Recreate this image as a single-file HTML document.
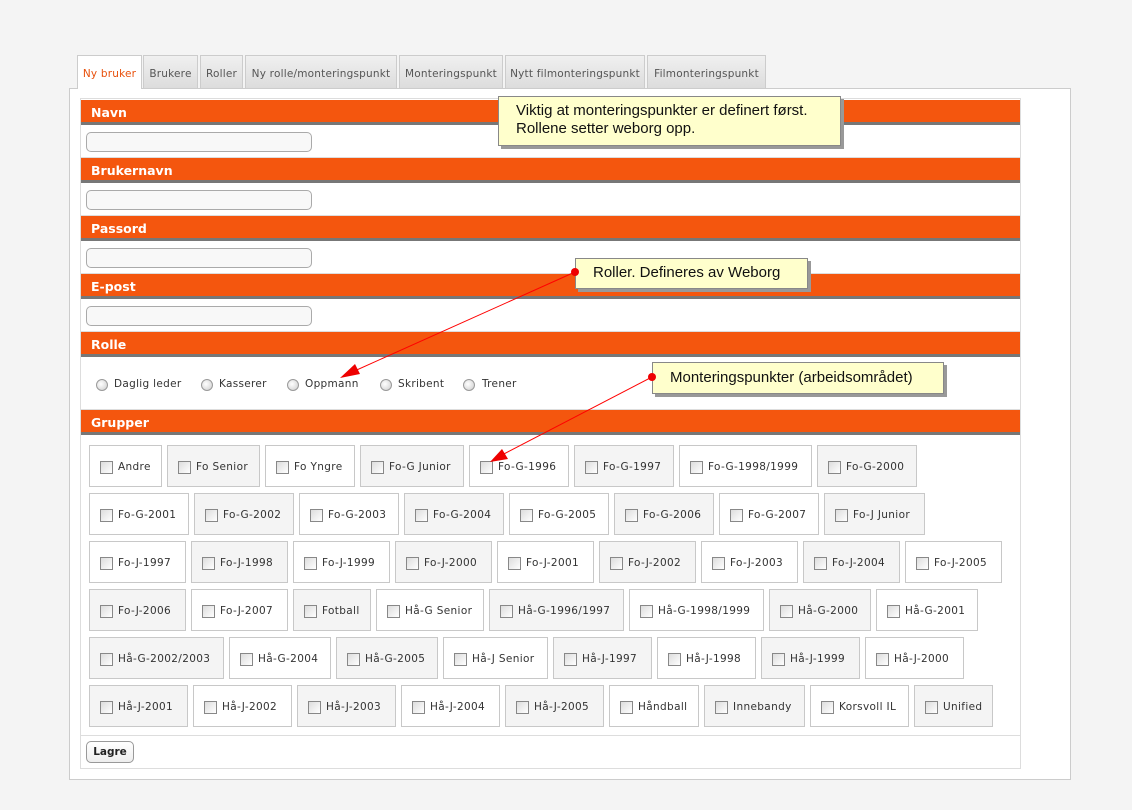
<!DOCTYPE html>
<html><head><meta charset="utf-8"><style>
*{box-sizing:border-box;margin:0;padding:0}
body{width:1132px;height:810px;background:#f4f4f4;position:relative;font-family:"DejaVu Sans",Verdana,sans-serif;font-size:11px;color:#333;overflow:hidden}
.abs{position:absolute}
.tab{position:absolute;top:55px;height:33px;border:1px solid #ccc;border-bottom:none;background:linear-gradient(#f0f0f0,#dcdcdc);color:#555;font-size:10.5px;line-height:36px;text-align:center;white-space:nowrap;letter-spacing:0.2px}
.tab.act{background:#fff;color:#e8500c;height:34px}
.outer{position:absolute;left:69px;top:88px;width:1002px;height:692px;background:#fff;border:1px solid #ccc}
.inner{position:absolute;left:80px;top:98px;width:941px;height:671px;border:1px solid #ddd;background:#fff}
.hd{position:absolute;left:81px;width:939px;height:25px;background:#f4560e;border-bottom:3px solid #777;color:#fff;font-weight:bold;font-size:12.5px;line-height:25px;padding-left:10px;font-family:"DejaVu Sans",sans-serif}
.sep{position:absolute;left:81px;width:939px;height:1px;background:#ddd}
.inp{position:absolute;left:86px;width:226px;height:20px;border:1px solid #aaa;border-radius:5px;background:#f8f8f8}
.rad{position:absolute;top:379px;width:12px;height:12px;border-radius:50%;border:1px solid #999;background:radial-gradient(circle at 40% 40%,#fff,#ccc)}
.rl{position:absolute;top:378px;font-size:10.5px;color:#333;letter-spacing:0.3px}
.g{position:absolute;height:42px;border:1px solid #c8c8c8;background:#fff;font-size:10.5px;line-height:42px;padding-left:28px;white-space:nowrap;color:#333;letter-spacing:0.35px}
.g.o{background:#f4f4f4}
.g:before{content:"";position:absolute;left:10px;top:15px;width:11px;height:11px;border:1px solid #888;background:linear-gradient(135deg,#ddd,#fff)}
.note{position:absolute;background:#ffffcc;border:1px solid #888;box-shadow:3px 3px 0 #999;font-family:"Liberation Sans",Arial,sans-serif;font-size:15px;color:#111}
</style></head><body>
<div class="outer"></div>
<div class="tab act" style="left:77px;width:65px">Ny bruker</div>
<div class="tab" style="left:143px;width:55px">Brukere</div>
<div class="tab" style="left:200px;width:43px">Roller</div>
<div class="tab" style="left:245px;width:152px">Ny rolle/monteringspunkt</div>
<div class="tab" style="left:399px;width:104px">Monteringspunkt</div>
<div class="tab" style="left:505px;width:140px">Nytt filmonteringspunkt</div>
<div class="tab" style="left:647px;width:119px">Filmonteringspunkt</div>
<div class="inner"></div>

<div class="hd" style="top:100px">Navn</div><div class="inp" style="top:132px"></div><div class="sep" style="top:157px"></div>
<div class="hd" style="top:158px">Brukernavn</div><div class="inp" style="top:190px"></div><div class="sep" style="top:215px"></div>
<div class="hd" style="top:216px">Passord</div><div class="inp" style="top:248px"></div><div class="sep" style="top:273px"></div>
<div class="hd" style="top:274px">E-post</div><div class="inp" style="top:306px"></div><div class="sep" style="top:331px"></div>
<div class="hd" style="top:332px">Rolle</div>
<div class="rad" style="left:96px"></div><div class="rl" style="left:114px">Daglig leder</div>
<div class="rad" style="left:201px"></div><div class="rl" style="left:219px">Kasserer</div>
<div class="rad" style="left:287px"></div><div class="rl" style="left:305px">Oppmann</div>
<div class="rad" style="left:380px"></div><div class="rl" style="left:398px">Skribent</div>
<div class="rad" style="left:463px"></div><div class="rl" style="left:482px">Trener</div>
<div class="sep" style="top:409px"></div>
<div class="hd" style="top:410px">Grupper</div>

<div class="g" style="top:445px;left:89px;width:73px">Andre</div>
<div class="g o" style="top:445px;left:167px;width:93px">Fo Senior</div>
<div class="g" style="top:445px;left:265px;width:90px">Fo Yngre</div>
<div class="g o" style="top:445px;left:360px;width:104px">Fo-G Junior</div>
<div class="g" style="top:445px;left:469px;width:100px">Fo-G-1996</div>
<div class="g o" style="top:445px;left:574px;width:100px">Fo-G-1997</div>
<div class="g" style="top:445px;left:679px;width:133px">Fo-G-1998/1999</div>
<div class="g o" style="top:445px;left:817px;width:100px">Fo-G-2000</div>

<div class="g" style="top:493px;left:89px;width:100px">Fo-G-2001</div>
<div class="g o" style="top:493px;left:194px;width:100px">Fo-G-2002</div>
<div class="g" style="top:493px;left:299px;width:100px">Fo-G-2003</div>
<div class="g o" style="top:493px;left:404px;width:100px">Fo-G-2004</div>
<div class="g" style="top:493px;left:509px;width:100px">Fo-G-2005</div>
<div class="g o" style="top:493px;left:614px;width:100px">Fo-G-2006</div>
<div class="g" style="top:493px;left:719px;width:100px">Fo-G-2007</div>
<div class="g o" style="top:493px;left:824px;width:101px">Fo-J Junior</div>

<div class="g" style="top:541px;left:89px;width:97px">Fo-J-1997</div>
<div class="g o" style="top:541px;left:191px;width:97px">Fo-J-1998</div>
<div class="g" style="top:541px;left:293px;width:97px">Fo-J-1999</div>
<div class="g o" style="top:541px;left:395px;width:97px">Fo-J-2000</div>
<div class="g" style="top:541px;left:497px;width:97px">Fo-J-2001</div>
<div class="g o" style="top:541px;left:599px;width:97px">Fo-J-2002</div>
<div class="g" style="top:541px;left:701px;width:97px">Fo-J-2003</div>
<div class="g o" style="top:541px;left:803px;width:97px">Fo-J-2004</div>
<div class="g" style="top:541px;left:905px;width:97px">Fo-J-2005</div>

<div class="g o" style="top:589px;left:89px;width:97px">Fo-J-2006</div>
<div class="g" style="top:589px;left:191px;width:97px">Fo-J-2007</div>
<div class="g o" style="top:589px;left:293px;width:78px">Fotball</div>
<div class="g" style="top:589px;left:376px;width:108px">Hå-G Senior</div>
<div class="g o" style="top:589px;left:489px;width:135px">Hå-G-1996/1997</div>
<div class="g" style="top:589px;left:629px;width:135px">Hå-G-1998/1999</div>
<div class="g o" style="top:589px;left:769px;width:102px">Hå-G-2000</div>
<div class="g" style="top:589px;left:876px;width:102px">Hå-G-2001</div>

<div class="g o" style="top:637px;left:89px;width:135px">Hå-G-2002/2003</div>
<div class="g" style="top:637px;left:229px;width:102px">Hå-G-2004</div>
<div class="g o" style="top:637px;left:336px;width:102px">Hå-G-2005</div>
<div class="g" style="top:637px;left:443px;width:105px">Hå-J Senior</div>
<div class="g o" style="top:637px;left:553px;width:99px">Hå-J-1997</div>
<div class="g" style="top:637px;left:657px;width:99px">Hå-J-1998</div>
<div class="g o" style="top:637px;left:761px;width:99px">Hå-J-1999</div>
<div class="g" style="top:637px;left:865px;width:99px">Hå-J-2000</div>

<div class="g o" style="top:685px;left:89px;width:99px">Hå-J-2001</div>
<div class="g" style="top:685px;left:193px;width:99px">Hå-J-2002</div>
<div class="g o" style="top:685px;left:297px;width:99px">Hå-J-2003</div>
<div class="g" style="top:685px;left:401px;width:99px">Hå-J-2004</div>
<div class="g o" style="top:685px;left:505px;width:99px">Hå-J-2005</div>
<div class="g" style="top:685px;left:609px;width:90px">Håndball</div>
<div class="g o" style="top:685px;left:704px;width:101px">Innebandy</div>
<div class="g" style="top:685px;left:810px;width:99px">Korsvoll IL</div>
<div class="g o" style="top:685px;left:914px;width:79px">Unified</div>

<div class="sep" style="top:735px"></div>
<div class="abs" style="left:86px;top:741px;width:48px;height:22px;border:1px solid #999;border-radius:5px;background:linear-gradient(#fff,#eee);font-weight:bold;font-size:10.5px;line-height:21px;text-align:center;color:#222">Lagre</div>

<div class="note" style="left:498px;top:96px;width:343px;height:50px;padding:5px 0 0 17px;line-height:18px">Viktig at monteringspunkter er definert først.<br>Rollene setter weborg opp.</div>
<div class="note" style="left:575px;top:258px;width:233px;height:31px;padding:5px 0 0 17px">Roller. Defineres av Weborg</div>
<div class="note" style="left:652px;top:362px;width:292px;height:32px;padding:6px 0 0 17px">Monteringspunkter (arbeidsområdet)</div>

<svg class="abs" style="left:0;top:0" width="1132" height="810">
<line x1="575" y1="272" x2="350" y2="373" stroke="#f00" stroke-width="1"/>
<polygon points="340,378 355,364 360,374" fill="#e00"/>
<circle cx="575" cy="272" r="4" fill="#e00"/>
<line x1="652" y1="377" x2="500" y2="456" stroke="#f00" stroke-width="1"/>
<polygon points="490,462 502,449 508,459" fill="#e00"/>
<circle cx="652" cy="377" r="4" fill="#e00"/>
</svg>
</body></html>
